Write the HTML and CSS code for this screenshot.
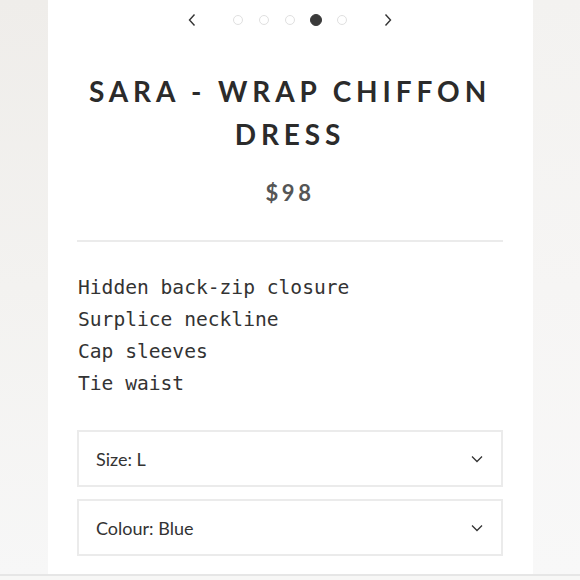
FILE: index.html
```html
<!DOCTYPE html>
<html>
<head>
<meta charset="utf-8">
<link rel="stylesheet" href="styles.css">
</head>
<body>
<div class="page">
  <div class="side side-left"></div>
  <main class="card">
    <nav class="pager">
      <svg class="arrow" width="10" height="14" viewBox="0 0 10 14"><path d="M7.5 1.5 L2.5 7 L7.5 12.5" fill="none" stroke="#333" stroke-width="1.4"/></svg>
      <div class="dots">
        <span class="dot"></span>
        <span class="dot"></span>
        <span class="dot"></span>
        <span class="dot active"></span>
        <span class="dot"></span>
      </div>
      <svg class="arrow" width="10" height="14" viewBox="0 0 10 14"><path d="M2.5 1.5 L7.5 7 L2.5 12.5" fill="none" stroke="#333" stroke-width="1.4"/></svg>
    </nav>
    <h1 class="title">SARA - WRAP CHIFFON DRESS</h1>
    <div class="price">$98</div>
    <hr class="rule">
    <div class="desc">
      <div>Hidden back-zip closure</div>
      <div>Surplice neckline</div>
      <div>Cap sleeves</div>
      <div>Tie waist</div>
    </div>
    <div class="select">
      <span>Size: L</span>
      <svg width="12" height="8" viewBox="0 0 12 8"><path d="M1 1.5 L6 6.5 L11 1.5" fill="none" stroke="#333" stroke-width="1.3"/></svg>
    </div>
    <div class="select">
      <span>Colour: Blue</span>
      <svg width="12" height="8" viewBox="0 0 12 8"><path d="M1 1.5 L6 6.5 L11 1.5" fill="none" stroke="#333" stroke-width="1.3"/></svg>
    </div>
  </main>
  <div class="side side-right"></div>
</div>
<div class="bottom"></div>
</body>
</html>
```
FILE: styles.css
```css
html, body {
  margin: 0;
  padding: 0;
  width: 580px;
  height: 580px;
  overflow: hidden;
  background: #f7f7f6;
}
.page {
  display: flex;
  height: 574px;
}
.side {
  flex: 0 0 48px;
  background: linear-gradient(to bottom, #efedea 0%, #f3f2f0 50%, #f7f7f7 100%);
}
.side-right {
  flex: 0 0 47px;
  background: linear-gradient(to bottom, #f3f2f0 0%, #f6f5f4 50%, #f8f8f8 100%);
}
.card {
  flex: 1;
  background: #fff;
  padding: 0 30px 0 29px;
  display: flex;
  flex-direction: column;
  font-family: Lato, "Liberation Sans", sans-serif;
  color: #2b2b2b;
}
.pager {
  display: flex;
  justify-content: center;
  align-items: center;
  height: 40px;
  gap: 36px;
  margin-left: 0;
}
.arrow {
  display: block;
}
.dots {
  display: flex;
  gap: 16px;
}
.dot {
  width: 8px;
  height: 8px;
  border-radius: 50%;
  border: 1px solid #e0e0e0;
}
.dot.active {
  background: #3a3a3a;
  border-color: #3a3a3a;
  width: 10px;
  height: 10px;
  margin: -1px;
}
.title {
  margin: 30px 0 0;
  text-align: center;
  font-size: 28px;
  font-weight: 700;
  letter-spacing: 4.9px;
  line-height: 43px;
}
.price {
  margin-top: 24px;
  text-align: center;
  font-size: 22px;
  font-weight: 700;
  letter-spacing: 3.5px;
  color: #555;
  line-height: 26px;
}
.rule {
  margin: 34px 0 0;
  border: 0;
  height: 2px;
  background: #ebebeb;
}
.desc {
  margin-top: 30px;
  font-family: "DejaVu Sans Mono", monospace;
  font-size: 19.6px;
  line-height: 32px;
  color: #333;
  padding-left: 1px;
}
.select {
  margin-top: 12px;
  height: 53px;
  border: 2px solid #ebebeb;
  display: flex;
  align-items: center;
  justify-content: space-between;
  padding: 0 18px 0 17px;
  font-size: 18px;
  color: #333;
}
.desc + .select {
  margin-top: 30px;
}
.bottom {
  height: 2px;
  background: #e6e6e6;
}
```
